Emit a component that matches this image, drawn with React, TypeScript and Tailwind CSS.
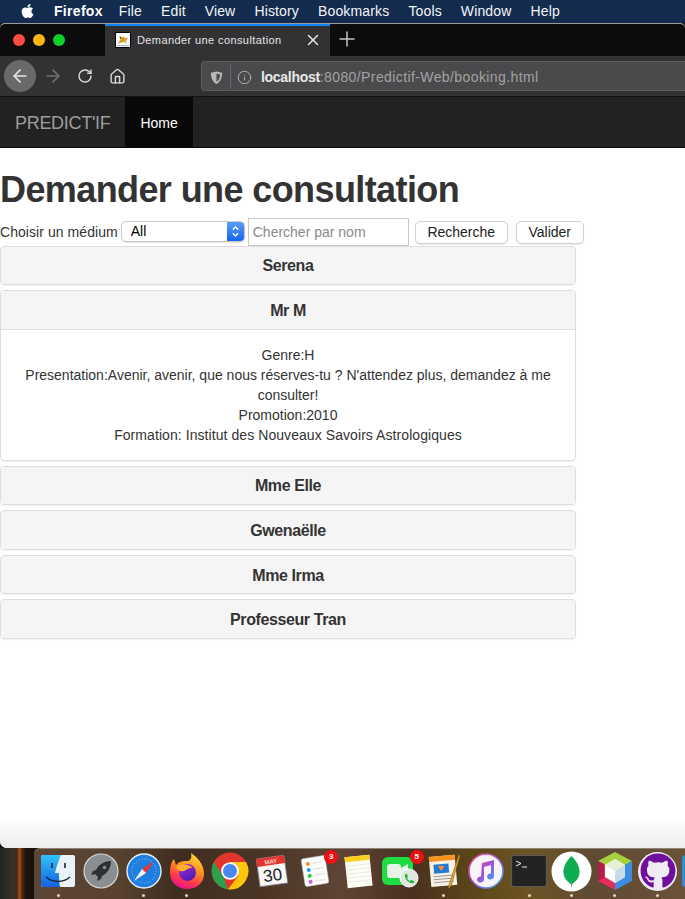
import { FaApple, FaGithub } from "react-icons/fa";
import { ArrowLeft, ArrowRight, Home, Info, Plus, RotateCw, X } from "lucide-react";
import type { ReactNode } from "react";

const menus = ["File", "Edit", "View", "History", "Bookmarks", "Tools", "Window", "Help"];
const mediums = ["Mme Elle", "Gwenaëlle", "Mme Irma", "Professeur Tran"];

function Panel({ title, children }: { title: string; children?: ReactNode }) {
  return (
    <div className="mb-[5px] rounded-[4px] border border-[#ddd] bg-white shadow-[0_1px_1px_rgba(0,0,0,0.05)]">
      <h4 className={`rounded-t-[3px] bg-[#f5f5f5] px-[15px] pt-[10.7px] pb-[9.3px] text-center text-[16px] leading-[17.6px] font-bold tracking-[-0.4px] text-[#333] ${children ? "border-b border-[#ddd]" : ""}`}>
        {title}
      </h4>
      {children}
    </div>
  );
}

function DockItem({ dot, children }: { dot?: boolean; children: ReactNode }) {
  return (
    <div className="flex w-[42.8px] shrink-0 flex-col items-center">
      <div className="relative flex h-[44px] w-[42px] items-center justify-center">{children}</div>
      <div className={`mt-[1px] h-[3px] w-[3px] rounded-full ${dot ? "bg-[#e8d5b8]" : ""}`} />
    </div>
  );
}

function Badge({ n }: { n: number }) {
  return (
    <span className="absolute top-[1px] right-[-2px] flex h-[14px] w-[14px] items-center justify-center rounded-full bg-[#ee0f14] text-[8px] font-bold text-white">
      {n}
    </span>
  );
}

export default function App() {
  return (
    <div className="flex h-[899px] w-[685px] flex-col overflow-hidden bg-[#1c1510] font-['Liberation_Sans',Arial,sans-serif]">
      {/* mac menu bar */}
      <div className="flex h-[23px] shrink-0 items-center bg-[#132c4e] pb-[1px] text-[14px] text-[#f2f4f7]">
        <FaApple className="mr-[19px] ml-[20px] h-[16px] w-[15px] text-white" />
        <span className="mr-[16px] font-bold tracking-[0.3px] text-white">Firefox</span>
        <div className="flex gap-[19px] tracking-[0.15px]">
          {menus.map((m) => (
            <span key={m}>{m}</span>
          ))}
        </div>
      </div>

      <div className="flex min-h-0 flex-1 flex-col overflow-hidden rounded-t-[5px] rounded-bl-[7px] border-t border-[#9b9b9b] bg-white">
        {/* tab strip */}
        <div className="flex h-[32px] shrink-0 items-stretch bg-[#0c0c0c]">
          <div className="flex w-[105px] items-center gap-[8px] pl-[13px]">
            <span className="h-[12px] w-[12px] rounded-full bg-[#fd4b43]" />
            <span className="h-[12px] w-[12px] rounded-full bg-[#fdb70f]" />
            <span className="h-[12px] w-[12px] rounded-full bg-[#0fcf2b]" />
          </div>
          <div className="flex w-[225px] items-center border-t-2 border-[#0a84ff] bg-[#323234] pb-[2px] pl-[10px] text-[#e6e6e6]">
            <svg viewBox="0 0 16 16" className="h-[16px] w-[16px] shrink-0 border border-black bg-white">
              <path d="M2 12 L5 8 L4 3 L6 5 L9 4 L10 6 L14 5 L11 9 L13 13 L9 10 L6 11 Z" fill="#d89a2c" />
              <path d="M4 3 L6 5 L5 7 Z" fill="#6b4a12" />
              <path d="M1 14 L15 14 L15 15 L1 15 Z" fill="#8aa0b0" />
            </svg>
            <span className="ml-[6px] text-[11px] tracking-[0.4px]">Demander une consultation</span>
            <X className="mr-[8px] ml-auto h-[18px] w-[18px]" strokeWidth={2} />
          </div>
          <div className="flex flex-1 items-center pb-[2px] pl-[5px]">
            <Plus className="h-[24px] w-[24px] text-[#c4c4c4]" strokeWidth={1.5} />
          </div>
        </div>

        {/* toolbar */}
        <div className="flex h-[41px] shrink-0 items-center border-b border-[#111] bg-[#323234] pl-[4px] text-[#d8d8d8]">
          <div className="flex h-[32px] w-[32px] items-center justify-center rounded-full bg-[#69696b]">
            <ArrowLeft className="h-[20px] w-[20px] text-[#e6e6e6]" strokeWidth={2} />
          </div>
          <ArrowRight className="ml-[7px] h-[20px] w-[20px] text-[#707072]" strokeWidth={2} />
          <RotateCw className="ml-[14px] h-[16px] w-[16px]" strokeWidth={2.2} />
          <Home className="ml-[16px] h-[17px] w-[17px]" strokeWidth={2} />
          <div className="ml-[75px] flex h-[30px] min-w-0 flex-1 items-center rounded-l-[4px] border border-r-0 border-[#5c5c5e] bg-[#4a4a4c] pt-[2px] pl-[7px] text-[14px]">
            <svg viewBox="0 0 16 16" className="h-[15px] w-[15px] shrink-0 text-[#b8b8b8]">
              <path d="M8 1.5 L14 3 C14 9 12 13 8 15 C4 13 2 9 2 3 Z" fill="currentColor" />
              <path d="M8 3.8 L11.8 4.7 C11.7 8.5 10.5 11 8 12.6 Z" fill="#4a4a4c" />
            </svg>
            <div className="mx-[6px] h-[24px] w-px bg-[#66666a]" />
            <Info className="mr-[9px] h-[15px] w-[15px] shrink-0 text-[#b8b8b8]" strokeWidth={1.5} />
            <span className="font-bold tracking-[-0.3px] text-[#e8e8e8]">localhost</span>
            <span className="tracking-[0.4px] text-[#a2a2a2]">:8080/Predictif-Web/booking.html</span>
          </div>
        </div>

        {/* bootstrap navbar */}
        <nav className="flex h-[51px] shrink-0 items-stretch border-b border-[#080808] bg-[#222]">
          <a className="flex items-center px-[15px] pt-[2px] text-[18px] tracking-[-0.3px] text-[#9d9d9d]">PREDICT'IF</a>
          <a className="flex items-center bg-[#080808] px-[15px] pt-[2px] text-[14px] text-white">Home</a>
        </nav>

        {/* page */}
        <div className="flex min-h-0 flex-1 flex-col text-[14px] text-[#333]">
          <h1 className="mt-[22px] mb-[8px] text-[36px] leading-[40px] font-bold tracking-[-0.6px]">Demander une consultation</h1>
          <div className="flex h-[27.6px] items-center whitespace-nowrap">
            <label className="mt-[2px] mr-[3px] tracking-[0.06px]">Choisir un médium</label>
            <div className="flex h-[21px] w-[124px] items-stretch overflow-hidden rounded-[5px] border border-[#c8c8c8] bg-white shadow-[0_1px_1px_rgba(0,0,0,0.1)]">
              <span className="flex-1 pl-[9px] text-[14px] leading-[19px] text-black">All</span>
              <span className="flex w-[17px] items-center justify-center bg-gradient-to-b from-[#5a9cf9] to-[#1263f0]">
                <svg viewBox="0 0 10 14" className="h-[13px] w-[9px]" fill="none" stroke="white" strokeWidth="1.5">
                  <path d="M2 5 L5 2 L8 5 M2 9 L5 12 L8 9" />
                </svg>
              </span>
            </div>
            <input
              placeholder="Chercher par nom"
              className="ml-[3px] h-[28px] w-[161px] border border-[#c8c8c8] px-[4px] text-[14px] text-[#333] outline-none placeholder:text-[#8a8a8a]"
            />
            <button className="mt-[2px] ml-[6px] h-[23px] w-[93px] rounded-[5px] border border-[#d0d0d0] bg-white text-[14px] text-[#222] shadow-[0_1px_1px_rgba(0,0,0,0.08)]">
              Recherche
            </button>
            <button className="mt-[2px] ml-[8px] h-[23px] w-[68px] rounded-[5px] border border-[#d0d0d0] bg-white text-[14px] text-[#222] shadow-[0_1px_1px_rgba(0,0,0,0.08)]">
              Valider
            </button>
          </div>

          <div className="w-[576px]">
            <Panel title="Serena" />
            <Panel title="Mr M">
              <div className="p-[15px] text-center leading-[20px]">
                <div>Genre:H</div>
                <div>Presentation:Avenir, avenir, que nous réserves-tu ? N'attendez plus, demandez à me consulter!</div>
                <div>Promotion:2010</div>
                <div className="tracking-[0.07px]">Formation: Institut des Nouveaux Savoirs Astrologiques</div>
              </div>
            </Panel>
            {mediums.map((m) => (
              <Panel key={m} title={m} />
            ))}
          </div>

          <div className="mt-auto h-[30px] bg-gradient-to-b from-white to-[#ededed]" />
        </div>
      </div>

      {/* wallpaper sliver + dock */}
      <div className="flex h-[51px] shrink-0">
        <div className="w-[34px] shrink-0 bg-[linear-gradient(90deg,#26241f_0%,#37332c_40%,#4a2a14_50%,#a8521a_58%,#5a2a10_64%,#1c130e_75%,#17100c_100%)]" />
        <div className="flex flex-1 items-start overflow-hidden rounded-tl-[6px] border-t border-[#8d8377] bg-[linear-gradient(90deg,#5b4637_0%,#57422f_13%,#3f2d20_22%,#4a3525_35%,#5e4434_47%,#4a3020_58%,#5a4518_67%,#6d5424_76%,#5f4a34_86%,#6a5238_100%)] pl-[3px]">
          <DockItem dot>
            <svg viewBox="0 0 34 32" className="h-[32px] w-[34px] overflow-hidden rounded-[2px]">
              <defs>
                <linearGradient id="fd" x1="0" y1="0" x2="0" y2="1">
                  <stop offset="0" stopColor="#2ec4fb" />
                  <stop offset="1" stopColor="#1560e0" />
                </linearGradient>
              </defs>
              <rect width="34" height="32" fill="#eaf2f8" />
              <path d="M0 0 H20 C17 7 15 13 14 18 H18 C18 23 18 27 19 32 H0 Z" fill="url(#fd)" />
              <path d="M11 8 V13 M24 8 V13" stroke="#123" strokeWidth="1.6" />
              <path d="M5 22 C12 28 22 28 29 22" stroke="#123" strokeWidth="1.3" fill="none" />
            </svg>
          </DockItem>
          <DockItem>
            <svg viewBox="0 0 36 36" className="h-[36px] w-[36px]">
              <circle cx="18" cy="18" r="17" fill="#8a8e90" stroke="#d5d7d8" strokeWidth="1.2" />
              <path d="M28 8 C22 8 16 11 13 17 L10 18 L8 22 L12 21 L15 24 L14 28 L18 26 L19 23 C25 20 28 14 28 8 Z" fill="#2d3033" />
              <circle cx="21.5" cy="14.5" r="1.8" fill="#8a8e90" />
            </svg>
          </DockItem>
          <DockItem dot>
            <svg viewBox="0 0 36 36" className="h-[36px] w-[36px]">
              <circle cx="18" cy="18" r="17" fill="#1f7fe0" stroke="#e8eef4" strokeWidth="1.4" />
              <circle cx="18" cy="18" r="12" fill="none" stroke="#8cc4f4" strokeWidth="1" strokeDasharray="1 2" />
              <path d="M28 8 L16 16 L20 20 Z" fill="#f0312c" />
              <path d="M8 28 L16 16 L20 20 Z" fill="#f2f2f2" />
            </svg>
          </DockItem>
          <DockItem dot>
            <svg viewBox="0 0 36 38" className="h-[38px] w-[36px]">
              <defs>
                <linearGradient id="fx" x1="0.75" y1="0" x2="0.35" y2="1">
                  <stop offset="0" stopColor="#ffe03a" />
                  <stop offset="0.45" stopColor="#ff8a1c" />
                  <stop offset="0.75" stopColor="#ff3750" />
                  <stop offset="1" stopColor="#e4108a" />
                </linearGradient>
                <linearGradient id="fy" x1="0" y1="0" x2="0.4" y2="1">
                  <stop offset="0" stopColor="#a52ee0" />
                  <stop offset="1" stopColor="#4f1cb0" />
                </linearGradient>
              </defs>
              <path d="M22 1 C28 5 35 12 35 22 C35 31 27 37 18 37 C8 37 1 30 1 21 C1 15 2 10 5 7 L7 13 C10 9 15 9 19 9 C22 8 23 5 22 1 Z" fill="url(#fx)" />
              <circle cx="18.5" cy="20.5" r="8.5" fill="url(#fy)" />
              <path d="M7 15 C12 11 20 12 24 16 C20 15 18 18 15 19 C12 20 9 19 7 15 Z" fill="#ffb02e" />
            </svg>
          </DockItem>
          <DockItem>
            <svg viewBox="0 0 38 38" className="h-[38px] w-[38px]">
              <circle cx="19" cy="19" r="18.5" fill="#e3352b" />
              <path d="M3 10 L12 24 L17 37.4 A18.5 18.5 0 0 1 3 10 Z" fill="#2aa14a" />
              <path d="M35 10 A18.5 18.5 0 0 1 17 37.4 L27 24 L19 10 Z" fill="#fbc60a" />
              <circle cx="19" cy="19" r="8.8" fill="#fff" />
              <circle cx="19" cy="19" r="7" fill="#4a87ee" />
            </svg>
          </DockItem>
          <DockItem>
            <svg viewBox="0 0 34 34" className="h-[34px] w-[34px]">
              <g transform="rotate(-8 17 17)">
                <rect x="3" y="3" width="28" height="28" fill="#f7f7f7" stroke="#778" strokeWidth="0.8" />
                <rect x="3" y="3" width="28" height="8" fill="#e2352e" />
                <text x="17" y="9.5" fontSize="6" fill="#fff" textAnchor="middle" fontFamily="Liberation Sans">MAY</text>
                <text x="17" y="27" fontSize="17" fill="#222" textAnchor="middle" fontFamily="Liberation Sans">30</text>
              </g>
            </svg>
          </DockItem>
          <DockItem>
            <svg viewBox="0 0 32 34" className="h-[34px] w-[32px]">
              <g transform="rotate(-9 16 17)">
                <rect x="4" y="3" width="24" height="28" rx="2" fill="#fbfbfb" stroke="#bbb" strokeWidth="0.5" />
                <circle cx="10" cy="9" r="2" fill="#f8931f" />
                <circle cx="10" cy="15" r="2" fill="#1b9af0" />
                <circle cx="10" cy="21" r="2" fill="#22c838" />
                <circle cx="10" cy="27" r="2" fill="#cc5be0" />
                <path d="M14 9 H25 M14 15 H25 M14 21 H25 M14 27 H25" stroke="#ddd" strokeWidth="0.8" />
              </g>
            </svg>
            <Badge n={3} />
          </DockItem>
          <DockItem>
            <svg viewBox="0 0 32 36" className="h-[36px] w-[32px]">
              <g transform="rotate(-6 16 18)">
                <rect x="4" y="3" width="25" height="31" fill="#fdfdf4" />
                <rect x="4" y="3" width="25" height="5" fill="#f8d020" />
                <path d="M4 12 H29 M4 16 H29 M4 20 H29 M4 24 H29 M4 28 H29" stroke="#ddd" strokeWidth="0.6" />
              </g>
            </svg>
          </DockItem>
          <DockItem>
            <svg viewBox="0 0 38 34" className="h-[34px] w-[38px]">
              <rect x="0" y="3" width="31" height="28" rx="6" fill="#1fdc43" />
              <rect x="5" y="10" width="14" height="14" rx="3" fill="#e8f3e8" />
              <path d="M19 14 L26 10 V24 L19 20 Z" fill="#e8f3e8" />
              <circle cx="27" cy="24" r="9" fill="#dfe8df" stroke="#fff" strokeWidth="1" />
              <path d="M23 20 L25 20 L26 23 L25 24 C25.5 25.5 26.5 26.5 28 27 L29 26 L32 27 L32 29 C27 30 22 25 23 20 Z" fill="#1fb53d" />
            </svg>
            <Badge n={5} />
          </DockItem>
          <DockItem dot>
            <svg viewBox="0 0 34 38" className="h-[38px] w-[34px]">
              <g transform="rotate(-5 15 19)">
                <rect x="3" y="4" width="26" height="30" fill="#f6f1e4" />
                <rect x="3" y="4" width="26" height="5" fill="#f6931e" />
                <rect x="7" y="12" width="15" height="9" fill="#2478d8" />
                <path d="M11 14 H18 L14.5 19 Z" fill="#f6931e" />
                <path d="M6 24 H26 M6 27 H26 M6 30 H26" stroke="#999" strokeWidth="1" />
              </g>
              <path d="M32 2 L22 33 L21 37 L24 34 L33 4 Z" fill="#f2a51e" stroke="#6b4a12" strokeWidth="0.5" />
            </svg>
          </DockItem>
          <DockItem>
            <svg viewBox="0 0 36 36" className="h-[36px] w-[36px]">
              <defs>
                <linearGradient id="mu" x1="0" y1="0" x2="1" y2="1">
                  <stop offset="0" stopColor="#f04a8a" />
                  <stop offset="0.5" stopColor="#a050e0" />
                  <stop offset="1" stopColor="#30b0f0" />
                </linearGradient>
              </defs>
              <circle cx="18" cy="18" r="17" fill="#f8f4f8" stroke="url(#mu)" strokeWidth="1.6" />
              <path d="M14 10 L26 7 V23 A3.5 3 0 1 1 23 20.5 V12 L16 14 V26 A3.5 3 0 1 1 13 23.5 Z" fill="url(#mu)" />
            </svg>
          </DockItem>
          <DockItem dot>
            <svg viewBox="0 0 36 32" className="h-[32px] w-[36px]">
              <rect x="0.5" y="0.5" width="35" height="31" rx="2" fill="#232323" stroke="#5a5a5a" strokeWidth="1.2" />
              <path d="M5 6 L10 8.5 L5 11" stroke="#eee" strokeWidth="1" fill="none" />
              <path d="M11 12 H16" stroke="#eee" strokeWidth="1" />
            </svg>
          </DockItem>
          <DockItem dot>
            <svg viewBox="0 0 42 42" className="h-[41px] w-[41px]">
              <circle cx="21" cy="21" r="20.5" fill="#fff" />
              <path d="M21 5 C28 12 30 18 29 24 C28 29 24 32 21.5 34 L21 38 L20.5 34 C18 32 14 29 13 24 C12 18 14 12 21 5 Z" fill="#0ead52" />
            </svg>
          </DockItem>
          <DockItem dot>
            <svg viewBox="0 0 36 40" className="h-[40px] w-[36px]">
              <path d="M18 1 L35 10 L18 20 L1 10 Z" fill="#a5d13d" />
              <path d="M35 10 V30 L18 39 V20 Z" fill="#3d8ee0" />
              <path d="M1 10 V30 L18 39 V20 Z" fill="#e62c5a" />
              <path d="M1 10 L7 13 V27 L1 30 Z" fill="#b01f4a" />
              <path d="M18 8 L28 14 V26 L18 32 L8 26 V14 Z" fill="#fff" />
              <path d="M18 8 L28 14 L18 20 L8 14 Z" fill="#e7f0d4" />
              <path d="M18 20 L28 14 V26 L18 32 Z" fill="#c8dce8" />
            </svg>
          </DockItem>
          <DockItem dot>
            <div className="flex h-[39px] w-[39px] items-center justify-center rounded-full bg-[#f0eaf2]">
              <FaGithub className="h-[36px] w-[36px] text-[#6f0f9c]" />
            </div>
          </DockItem>
          <DockItem>
            <div className="h-[32px] w-[36px] rounded-[4px] bg-[#2d8fd8]" />
          </DockItem>
        </div>
      </div>
    </div>
  );
}
